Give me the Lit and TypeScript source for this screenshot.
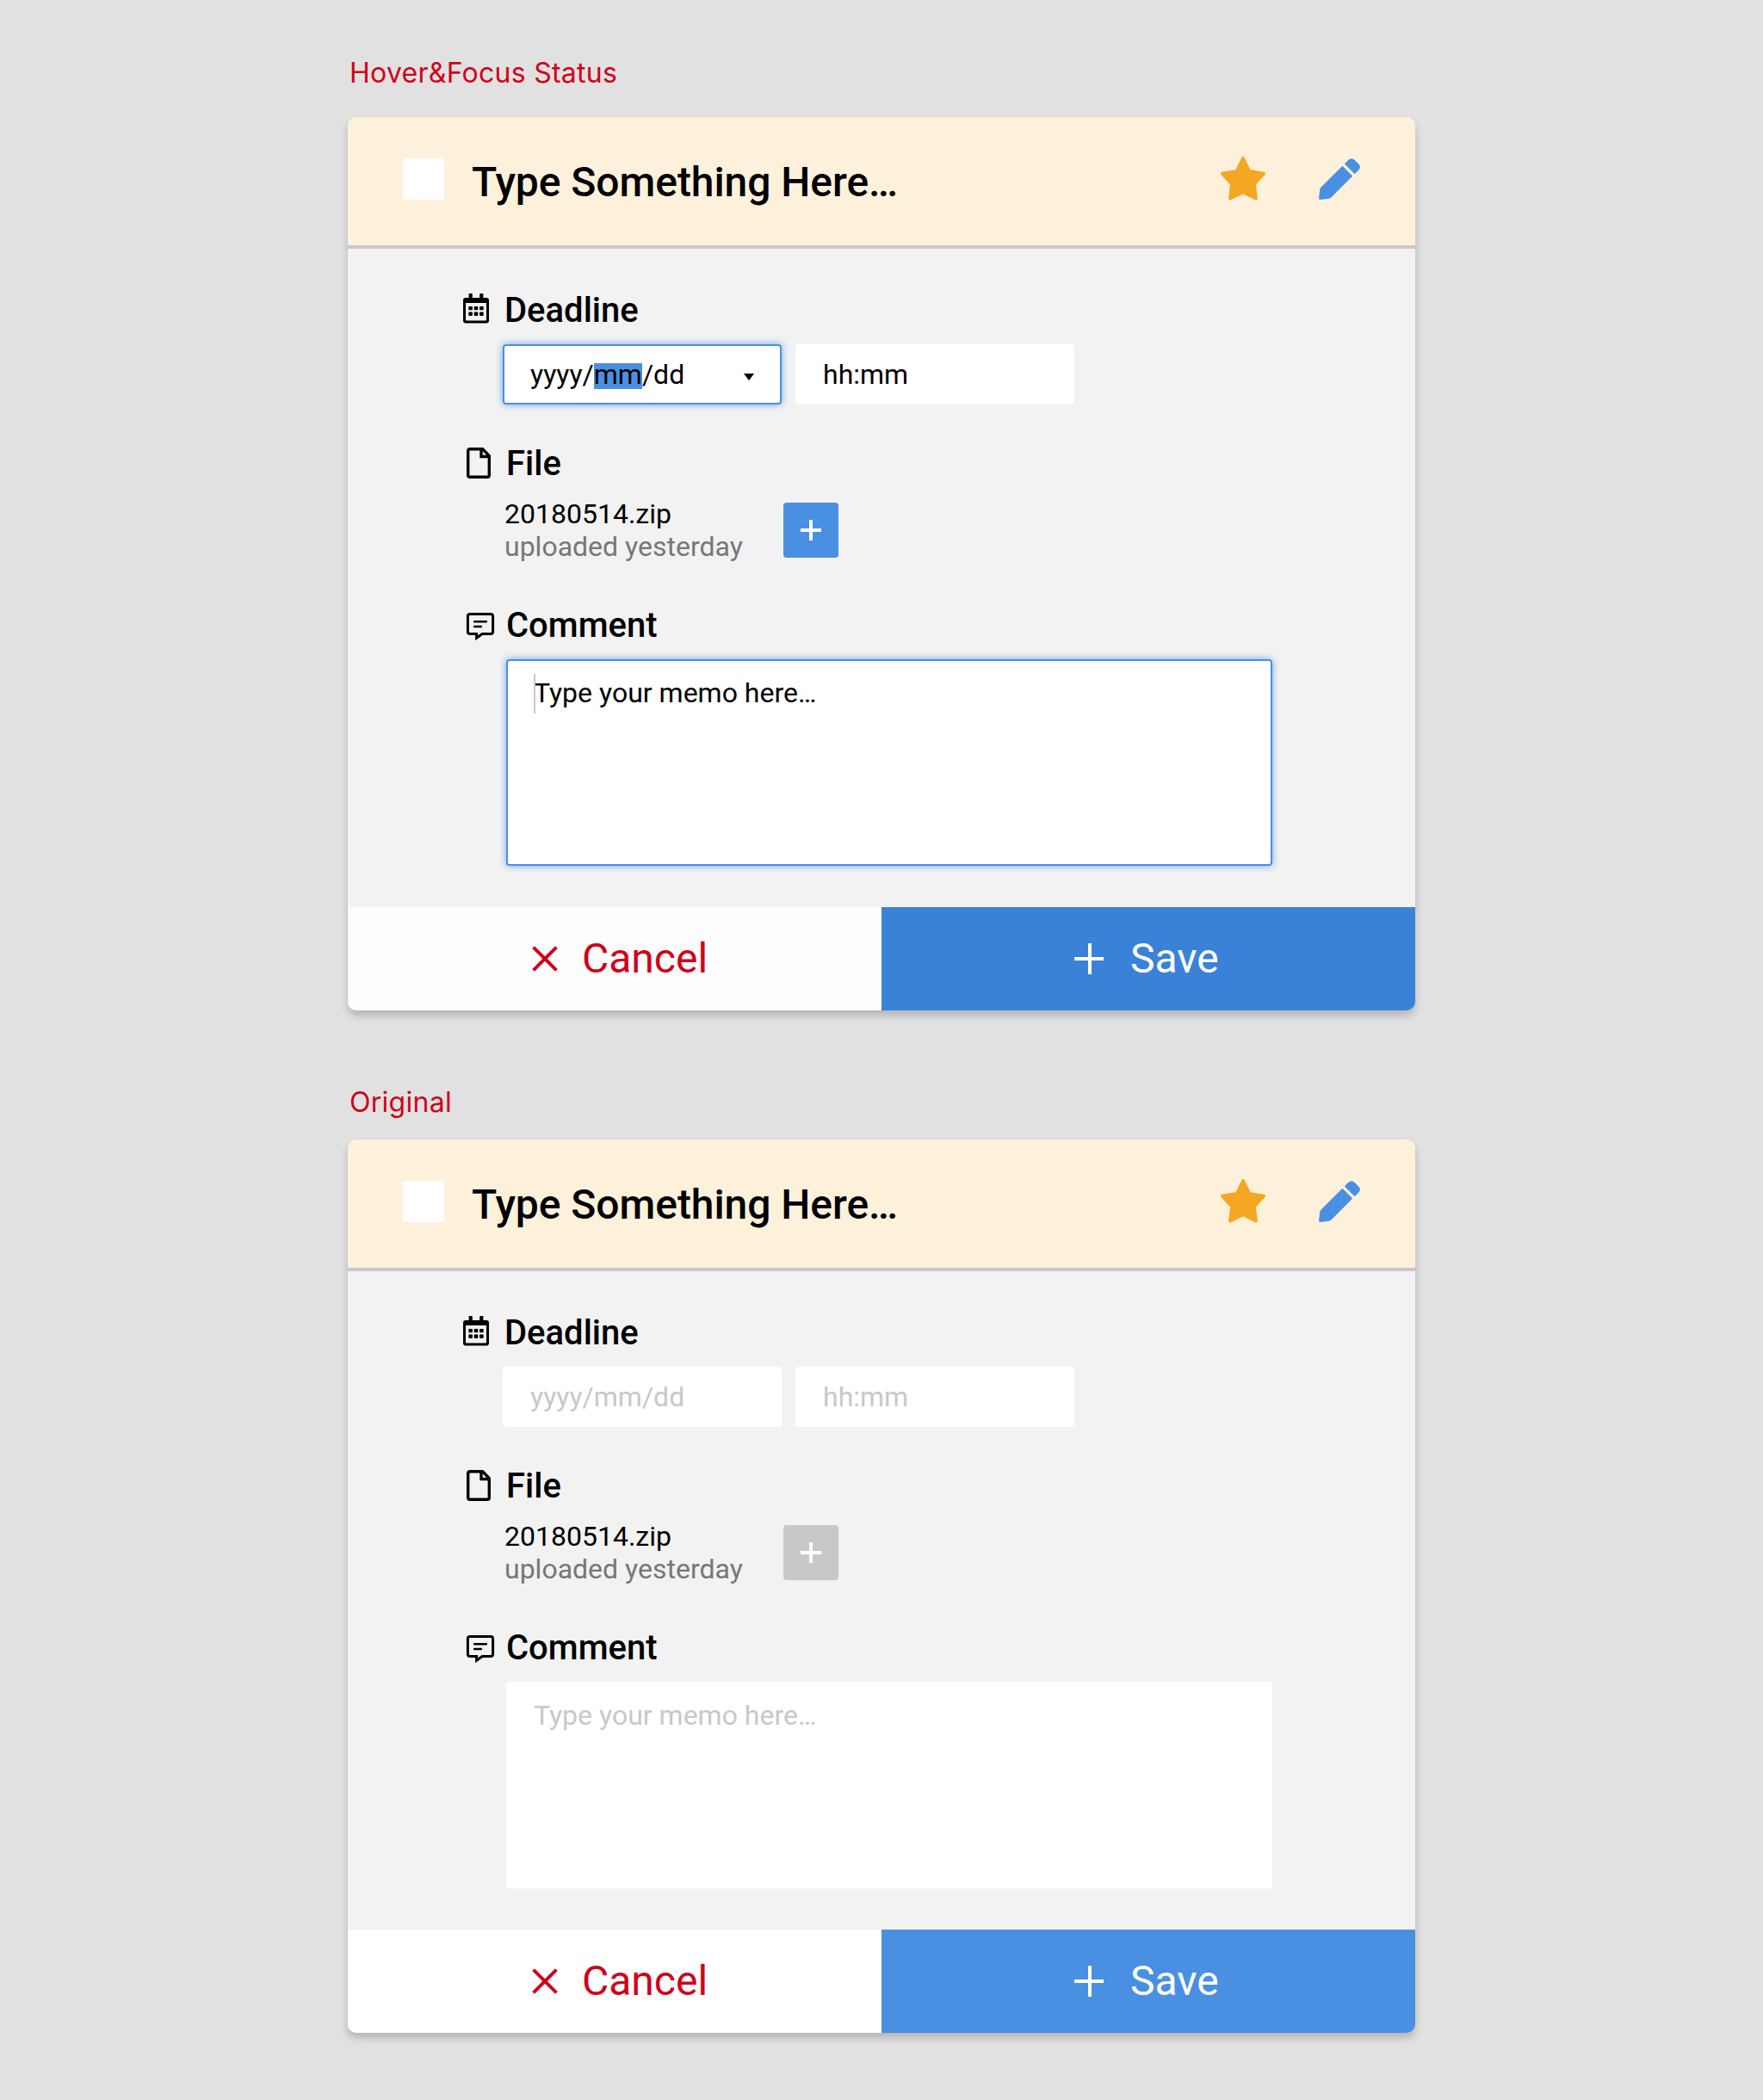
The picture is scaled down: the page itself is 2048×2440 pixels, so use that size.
import { LitElement, html, css, svg, nothing } from "lit";
import { customElement, property } from "lit/decorators.js";
import { classMap } from "lit/directives/class-map.js";

const starIcon = html`<svg width="52" height="52" viewBox="0 0 52 52">
  <path class="star" d="M26 2 L33.2 17 L50 19.7 L38.8 31.8 L40.9 48.4 L26 41.3 L11.1 48.4 L13.2 31.8 L2 19.7 L18.8 17 Z" />
</svg>`;

const pencilIcon = html`<svg width="48" height="48" viewBox="0 0 48 48">
  <path class="pencil" d="M26.6 9.4 Q27.4 8.6 28.2 9.4 L38.5 19.7 Q39.3 20.5 38.5 21.3 L14.6 45.2 Q13.4 46.6 11.6 46.8 L1.4 48 Q0 48.1 0 46.6 L1.2 36.4 Q1.4 34.6 2.6 33.4 Z" />
  <path class="pencil" d="M30.6 7.2 Q29.8 6.4 30.6 5.6 L34.4 1.8 Q38 -1.4 41.6 1.8 L46.2 6.4 Q49.6 10 46.2 13.6 L42.6 17.4 Q41.8 18.2 41 17.4 Z" />
</svg>`;

const calendarIcon = html`<svg width="30" height="35" viewBox="0 0 30 35">
  <path d="M6.6 1a1 1 0 0 1 1-1h2.2a1 1 0 0 1 1 1v4h8.4V1a1 1 0 0 1 1-1h2.2a1 1 0 0 1 1 1v4H27a3 3 0 0 1 3 3v23.5a3 3 0 0 1-3 3H3a3 3 0 0 1-3-3V8a3 3 0 0 1 3-3h3.6zM3 11v19.5a1 1 0 0 0 1 1h22a1 1 0 0 0 1-1V11z" fill-rule="evenodd" />
  ${[15, 21.6].map((y) =>
    [6.3, 12.7, 19.1].map((x) => svg`<rect x=${x} y=${y} width="4.6" height="4.3" rx="0.8" />`)
  )}
</svg>`;

const fileIcon = html`<svg width="28" height="36" viewBox="0 0 28 36">
  <path class="line" d="M1.7 3.7a2 2 0 0 1 2-2h14.9L26.3 9.6V32.3a2 2 0 0 1-2 2H3.7a2 2 0 0 1-2-2z" />
  <path class="line" d="M17 2.5v8h8.6" />
</svg>`;

const commentIcon = html`<svg width="32" height="32" viewBox="0 0 32 32">
  <path class="line thin" d="M4 1.4h24a2.6 2.6 0 0 1 2.6 2.6v18a2.6 2.6 0 0 1-2.6 2.6H18.2L11.6 29.3V24.6H4A2.6 2.6 0 0 1 1.4 22V4A2.6 2.6 0 0 1 4 1.4z" />
  <path class="line words" d="M9.2 10.2h13.6M9.2 16h7.6" />
</svg>`;

const crossIcon = html`<svg class="cross" width="30" height="30" viewBox="0 0 30 30"><path d="M1.6 1.6l26.8 26.8M28.4 1.6L1.6 28.4" /></svg>`;
const plusIcon = (width: number, height: number) => html`<svg class="plus" width=${width} height=${height} viewBox="0 0 ${width} ${height}">
  <path d="M${height / 2} 0V${height}M0 ${height / 2}H${width}" />
</svg>`;

@customElement("task-card")
export class TaskCard extends LitElement {
  @property({ type: Boolean }) active = false;

  static styles = css`
    :host {
      display: block;
      font-family: Roboto, "Liberation Sans", sans-serif;
      color: #000;
    }
    svg {
      display: block;
      flex: none;
      overflow: visible;
    }
    .card {
      width: 1240px;
      border-radius: 10px;
      background: #f2f2f2;
      box-shadow: 0 6px 10px rgba(0, 0, 0, 0.2);
      display: flex;
      flex-direction: column;
    }
    .head {
      height: 101px;
      padding: 48px 64px 0;
      border-bottom: 4px solid #c8c8c8;
      border-radius: 10px 10px 0 0;
      background: #fef1dc;
      display: flex;
      align-items: flex-start;
    }
    .check {
      width: 48px;
      height: 48px;
      border-radius: 4px;
      background: #fff;
    }
    .title {
      flex: 1;
      margin-left: 32px;
      font-size: 48px;
      line-height: 56px;
      font-weight: 500;
      letter-spacing: -0.06px;
    }
    .actions {
      display: flex;
      gap: 62px;
    }
    .star {
      fill: #f5a623;
      stroke: #f5a623;
      stroke-width: 4;
      stroke-linejoin: round;
    }
    .actions svg:first-child {
      margin-top: -2px;
    }
    .pencil {
      fill: #4a90e2;
    }
    .body {
      height: 717px;
      padding: 48px 0 0 134px;
    }
    .heading {
      display: flex;
      align-items: center;
      gap: 18px;
      height: 48px;
      font-size: 40px;
      line-height: 48px;
      font-weight: 500;
    }
    .heading.file,
    .heading.comment {
      padding-left: 4px;
    }
    .heading.comment {
      gap: 14px;
    }
    .heading.deadline svg {
      margin-top: -5px;
    }
    .heading.file svg {
      margin-top: -2px;
    }
    .heading.comment svg {
      margin-top: 2px;
    }
    .line {
      fill: none;
      stroke: #000;
      stroke-width: 3.4;
    }
    .line.thin {
      stroke-width: 3;
    }
    .line.words {
      stroke-width: 2.6;
      stroke-linecap: round;
    }
    .inputs {
      display: flex;
      gap: 16px;
      margin: 15px 0 45px 46px;
    }
    .field {
      box-sizing: border-box;
      border-radius: 4px;
      border: 2px solid #fff;
      background: #fff;
      font-size: 32px;
      line-height: 38px;
      color: #c8c8c8;
    }
    .input {
      width: 324px;
      height: 70px;
      padding: 0 30px;
      display: flex;
      align-items: center;
      justify-content: space-between;
    }
    .active .field {
      color: #000;
    }
    .field.focus {
      border-color: #4a90e2;
      box-shadow: 0 0 8px rgba(74, 144, 226, 0.8);
    }
    .selected {
      background: linear-gradient(#4a90e2, #4a90e2) 0 6px / 100% 30px no-repeat;
    }
    .arrow {
      margin-top: 6px;
    }
    .upload {
      display: flex;
      align-items: center;
      margin: 15px 0 49px 48px;
      font-size: 32px;
      line-height: 38px;
    }
    .names {
      width: 324px;
    }
    .muted {
      color: #777;
    }
    .add {
      width: 64px;
      height: 64px;
      border-radius: 4px;
      background: #c8c8c8;
      display: flex;
      align-items: center;
      justify-content: center;
    }
    .active .add {
      background: #4a90e2;
    }
    .plus {
      fill: none;
      stroke: #fff;
      stroke-width: 4;
    }
    .cross {
      fill: none;
      stroke: #d0021b;
      stroke-width: 4;
    }
    .memo {
      position: relative;
      width: 890px;
      height: 240px;
      margin: 15px 0 0 50px;
      padding: 18px 30px;
    }
    .caret {
      position: absolute;
      left: 30px;
      top: 15px;
      width: 2px;
      height: 46px;
      background: #c8c8c8;
    }
    .foot {
      display: flex;
      height: 120px;
      font-size: 48px;
      line-height: 58px;
    }
    .btn {
      box-sizing: border-box;
      width: 620px;
      display: flex;
      align-items: center;
    }
    .btn svg {
      margin-top: -1px;
    }
    .cancel {
      padding-left: 214px;
      gap: 28px;
      color: #d0021b;
      background: #fff;
      border-radius: 0 0 0 10px;
    }
    .save {
      padding-left: 224px;
      gap: 31px;
      color: #fff;
      background: #4a90e2;
      border-radius: 0 0 10px 0;
    }
    .save svg {
      margin-top: 0;
    }
    .active .cancel {
      background: #fdfdfd;
    }
    .active .save {
      background: #3a82d8;
    }
  `;

  render() {
    const focus = { field: true, focus: this.active };
    return html`<section class="card ${this.active ? "active" : ""}">
      <header class="head">
        <span class="check"></span>
        <span class="title">Type Something Here…</span>
        <div class="actions">${starIcon}${pencilIcon}</div>
      </header>
      <div class="body">
        <div class="heading deadline">${calendarIcon}<span>Deadline</span></div>
        <div class="inputs">
          <div class=${classMap({ ...focus, input: true })}>
            <span>yyyy/<span class=${this.active ? "selected" : ""}>mm</span>/dd</span>
            ${this.active
              ? html`<svg class="arrow" width="12" height="8" viewBox="0 0 12 8"><path d="M0 0h12L6 8z" /></svg>`
              : nothing}
          </div>
          <div class="field input"><span>hh:mm</span></div>
        </div>
        <div class="heading file">${fileIcon}<span>File</span></div>
        <div class="upload">
          <div class="names">
            <div>20180514.zip</div>
            <div class="muted">uploaded yesterday</div>
          </div>
          <div class="add">${plusIcon(24, 24)}</div>
        </div>
        <div class="heading comment">${commentIcon}<span>Comment</span></div>
        <div class=${classMap({ ...focus, memo: true })}>
          ${this.active ? html`<span class="caret"></span>` : nothing}Type your memo here…
        </div>
      </div>
      <footer class="foot">
        <div class="btn cancel">${crossIcon}<span>Cancel</span></div>
        <div class="btn save">${plusIcon(34, 36)}<span>Save</span></div>
      </footer>
    </section>`;
  }
}

@customElement("app-root")
export class AppRoot extends LitElement {
  static styles = css`
    :host {
      display: block;
      box-sizing: border-box;
      height: 2440px;
      padding: 66px 404px 0;
      background: #e1e1e1;
    }
    .label {
      height: 70px;
      padding-left: 2px;
      font: 400 32px/38px Inter, Roboto, sans-serif;
      letter-spacing: 0.27px;
      color: #d0021b;
    }
    .second {
      margin-top: 88px;
      height: 62px;
    }
  `;

  render() {
    return html`
      <div class="label">Hover&amp;Focus Status</div>
      <task-card active></task-card>
      <div class="label second">Original</div>
      <task-card></task-card>
    `;
  }
}
